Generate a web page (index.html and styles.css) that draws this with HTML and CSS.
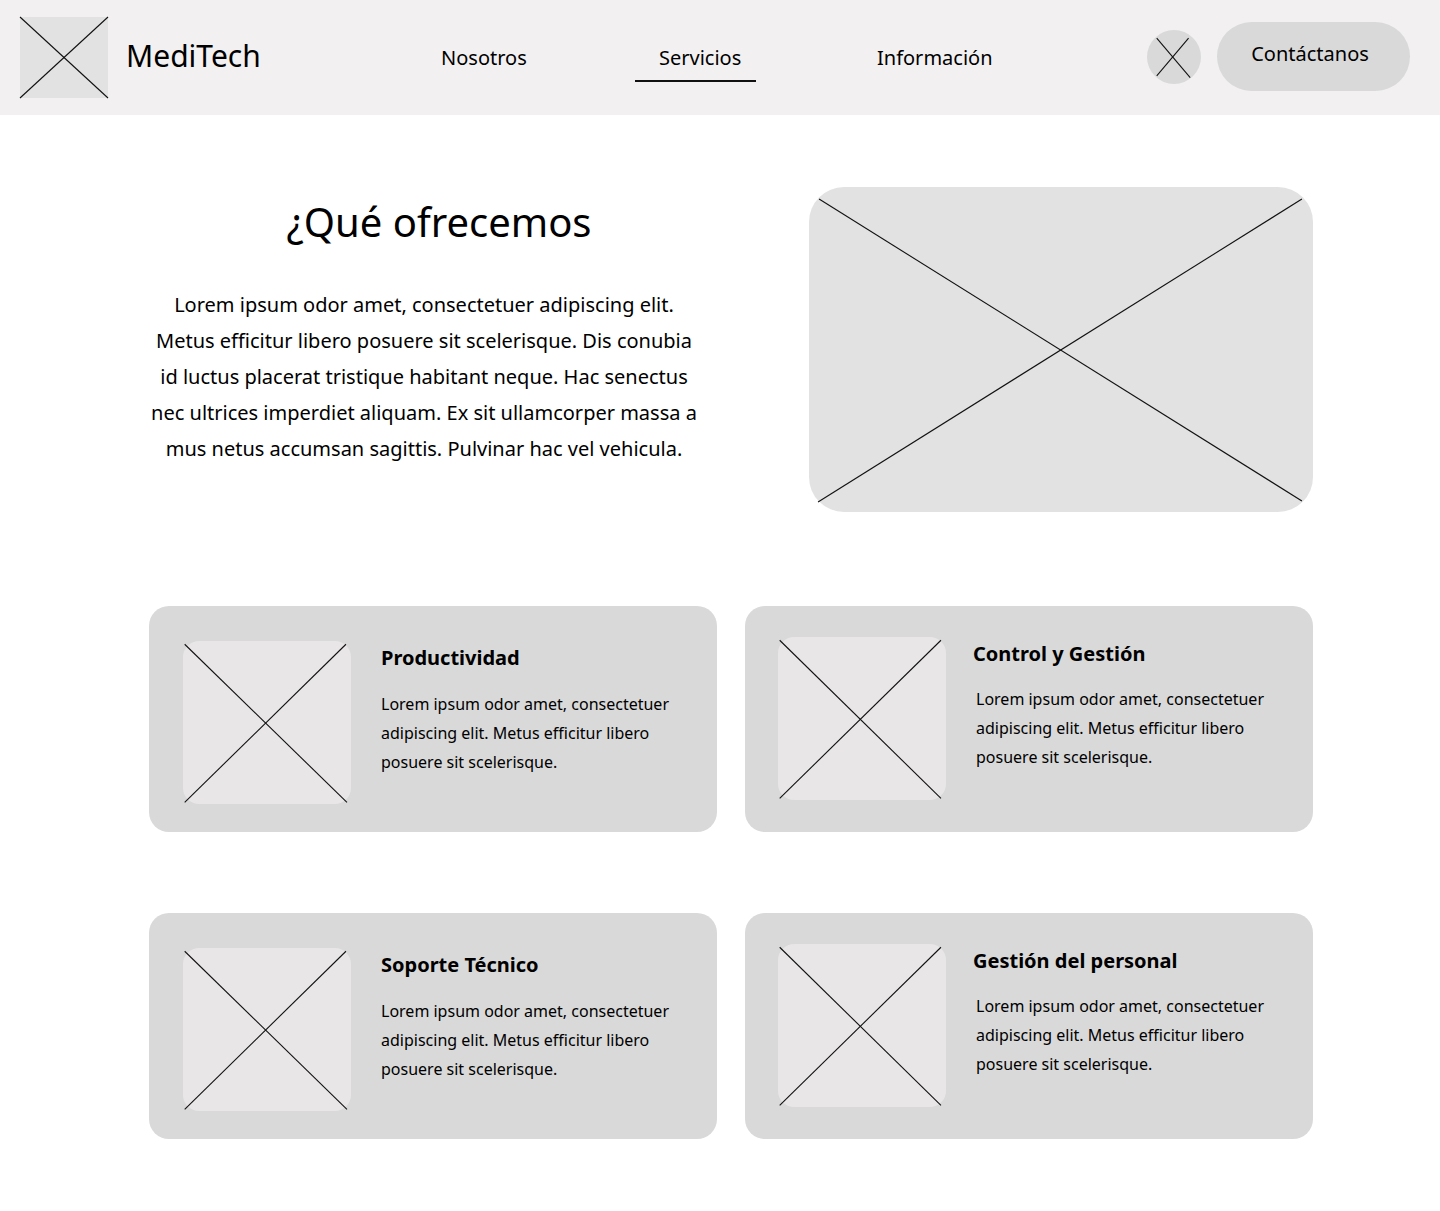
FILE: index.html
```html
<!DOCTYPE html>
<html lang="es">
<head>
<meta charset="utf-8">
<title>MediTech</title>
<link rel="stylesheet" href="styles.css">
</head>
<body>
<header class="header">
  <div class="logo">
    <svg class="x" viewBox="0 0 100 100" preserveAspectRatio="none"><line x1="0" y1="0" x2="100" y2="100"/><line x1="100" y1="0" x2="0" y2="100"/></svg>
  </div>
  <div class="brand">MediTech</div>
  <nav class="nav">
    <div class="nav-item"><a class="nav-link">Nosotros</a></div>
    <div class="nav-item"><a class="nav-link active">Servicios</a></div>
    <div class="nav-item"><a class="nav-link">Información</a></div>
  </nav>
  <div class="actions">
    <div class="avatar">
      <svg class="x" viewBox="0 0 100 100" preserveAspectRatio="none"><line x1="18" y1="15" x2="80" y2="88"/><line x1="77" y1="15" x2="18" y2="85"/></svg>
    </div>
    <button class="btn">Contáctanos</button>
  </div>
</header>

<main class="main">
  <section class="hero">
    <div class="hero-text">
      <h1 class="hero-title">¿Qué ofrecemos</h1>
      <p class="hero-desc">Lorem ipsum odor amet, consectetuer adipiscing elit.<br>Metus efficitur libero posuere sit scelerisque. Dis conubia<br>id luctus placerat tristique habitant neque. Hac senectus<br>nec ultrices imperdiet aliquam. Ex sit ullamcorper massa a<br>mus netus accumsan sagittis. Pulvinar hac vel vehicula.</p>
    </div>
    <div class="hero-img">
      <svg class="x" viewBox="0 0 100 100" preserveAspectRatio="none"><line x1="2" y1="3.7" x2="97.8" y2="96.6"/><line x1="1.8" y1="96.9" x2="97.8" y2="3.7"/></svg>
    </div>
  </section>

  <section class="cards">
    <article class="card card-a">
      <div class="card-img">
        <svg class="x" viewBox="0 0 100 100" preserveAspectRatio="none"><line x1="1" y1="2" x2="97.6" y2="99"/><line x1="97" y1="2" x2="1" y2="99"/></svg>
      </div>
      <div class="card-body">
        <h2 class="card-title">Productividad</h2>
        <p class="card-text">Lorem ipsum odor amet, consectetuer<br>adipiscing elit. Metus efficitur libero<br>posuere sit scelerisque.</p>
      </div>
    </article>
    <article class="card card-b">
      <div class="card-img">
        <svg class="x" viewBox="0 0 100 100" preserveAspectRatio="none"><line x1="1" y1="2" x2="97" y2="99"/><line x1="97" y1="2" x2="1" y2="99"/></svg>
      </div>
      <div class="card-body">
        <h2 class="card-title">Control y Gestión</h2>
        <p class="card-text">Lorem ipsum odor amet, consectetuer<br>adipiscing elit. Metus efficitur libero<br>posuere sit scelerisque.</p>
      </div>
    </article>
    <article class="card card-a">
      <div class="card-img">
        <svg class="x" viewBox="0 0 100 100" preserveAspectRatio="none"><line x1="1" y1="2" x2="97.6" y2="99"/><line x1="97" y1="2" x2="1" y2="99"/></svg>
      </div>
      <div class="card-body">
        <h2 class="card-title">Soporte Técnico</h2>
        <p class="card-text">Lorem ipsum odor amet, consectetuer<br>adipiscing elit. Metus efficitur libero<br>posuere sit scelerisque.</p>
      </div>
    </article>
    <article class="card card-b">
      <div class="card-img">
        <svg class="x" viewBox="0 0 100 100" preserveAspectRatio="none"><line x1="1" y1="2" x2="97" y2="99"/><line x1="97" y1="2" x2="1" y2="99"/></svg>
      </div>
      <div class="card-body">
        <h2 class="card-title">Gestión del personal</h2>
        <p class="card-text">Lorem ipsum odor amet, consectetuer<br>adipiscing elit. Metus efficitur libero<br>posuere sit scelerisque.</p>
      </div>
    </article>
  </section>
</main>
</body>
</html>
```

FILE: styles.css
```css
* { box-sizing: border-box; }
html, body { margin: 0; padding: 0; background: #ffffff; }
body {
  font-family: "Noto Sans", "Open Sans", "Liberation Sans", sans-serif;
  color: #000;
  min-height: 1211px;
}

.x { display: block; width: 100%; height: 100%; overflow: visible; }
.x line { stroke: #111; stroke-width: 1.1; vector-effect: non-scaling-stroke; }

/* Header */
.header {
  height: 115px;
  background: #f2f0f1;
  display: flex;
  align-items: center;
  padding-left: 20px;
}
.logo {
  width: 88px;
  height: 81px;
  background: #e2e2e2;
  flex: none;
}
.brand {
  font-size: 30px;
  line-height: 40px;
  margin-left: 18px;
  width: 291px;
  flex: none;
  padding-bottom: 3px;
}
.nav {
  display: flex;
  align-self: stretch;
  align-items: flex-start;
  padding-top: 44px;
}
.nav-item { width: 218px; }
.nav-link {
  display: inline-block;
  font-size: 20px;
  line-height: 27px;
  padding: 0 15px 9px 24px;
  border-bottom: 2px solid transparent;
  color: #000;
}
.nav-link.active { border-bottom-color: #111; }

.actions {
  margin-left: auto;
  margin-right: 30px;
  display: flex;
  align-items: center;
  gap: 16px;
}
.avatar {
  width: 54px;
  height: 54px;
  border-radius: 50%;
  background: #d9d9d9;
  margin-top: -2px;
}
.btn {
  width: 193px;
  height: 69px;
  border: 0;
  border-radius: 35px;
  background: #d9d9d9;
  font-family: inherit;
  font-size: 20px;
  color: #000;
  padding: 0 7px 6px 0;
  margin-top: -2px;
}

/* Main */
.main {
  padding: 72px 0 72px 149px;
  width: 1313px;
}

.hero {
  display: flex;
  gap: 80px;
}
.hero-text {
  width: 580px;
  padding-top: 11px;
}
.hero-title {
  margin: 0;
  font-size: 40px;
  line-height: 48px;
  font-weight: 400;
  text-align: center;
}
.hero-desc {
  margin: 41px 0 0 0;
  width: 550px;
  font-size: 20px;
  line-height: 36px;
  text-align: center;
}
.hero-img {
  width: 504px;
  height: 325px;
  border-radius: 35px;
  background: #e2e2e2;
  flex: none;
}

.cards {
  margin-top: 94px;
  display: grid;
  grid-template-columns: 568px 568px;
  column-gap: 28px;
  row-gap: 81px;
}
.card {
  height: 226px;
  border-radius: 20px;
  background: #d9d9d9;
  display: flex;
  align-items: flex-start;
}
.card-img {
  width: 168px;
  height: 163px;
  border-radius: 16px;
  background: #e8e6e7;
  flex: none;
}
.card-title {
  margin: 0;
  font-size: 20px;
  line-height: 28px;
  font-weight: 700;
}
.card-text {
  margin: 0;
  font-size: 16px;
  line-height: 29px;
}
.card-a { padding: 35px 0 0 34px; }
.card-a .card-body { margin-left: 30px; padding-top: 3px; }
.card-a .card-text { margin-top: 18px; }
.card-b { padding: 31px 0 0 33px; }
.card-b .card-body { margin-left: 27px; padding-top: 3px; }
.card-b .card-text { margin-top: 17px; padding-left: 3px; }
```
